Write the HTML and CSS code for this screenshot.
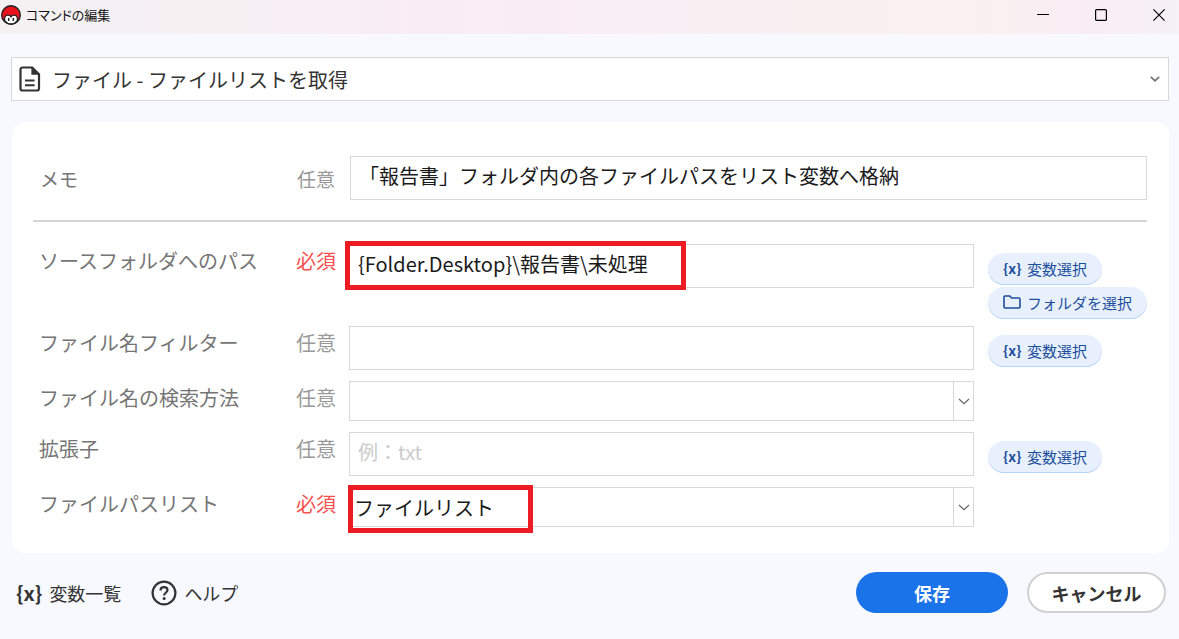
FILE: index.html
```
<!DOCTYPE html>
<html lang="ja">
<head>
    <meta charset="UTF-8">
    <meta name="viewport" content="width=device-width, initial-scale=1.0">
    <title>コマンドの編集</title>
    <link rel="stylesheet" href="styles.css">
</head>
<body>
    <!-- Title bar -->
    <header class="titlebar">
        <svg class="app-icon" width="20" height="20" viewBox="0 0 20 20">
            <circle cx="10" cy="10" r="9.3" fill="#e8141c" stroke="#222" stroke-width="1.4"/>
            <path d="M3.8 15.8C3 12.4 4.2 10.2 6.8 10.2c1.5 0 2.6.6 3.2 1.6.6-1 1.7-1.6 3.2-1.6 2.6 0 3.8 2.2 3 5.6-1.6 2-3.6 3.1-6.2 3.1s-4.6-1.1-6.2-3.1z" fill="#fff" stroke="#222" stroke-width="1.3"/>
            <path d="M7.7 13v3M12.3 13v3" stroke="#222" stroke-width="1.5"/>
        </svg>
        <h1>コマンドの編集</h1>
        <div class="window-buttons">
            <button type="button" aria-label="最小化">
                <svg width="12" height="12" viewBox="0 0 12 12"><path d="M0 5.5h12" stroke="#000"/></svg>
            </button>
            <button type="button" aria-label="最大化">
                <svg width="12" height="12" viewBox="0 0 12 12"><rect x=".6" y=".6" width="10.8" height="10.8" rx="1" fill="none" stroke="#000" stroke-width="1.2"/></svg>
            </button>
            <button type="button" aria-label="閉じる">
                <svg width="12" height="12" viewBox="0 0 12 12"><path d="M.4.4l11.2 11.2M11.6.4L.4 11.6" stroke="#000" stroke-width="1.2"/></svg>
            </button>
        </div>
    </header>

    <main>
        <!-- Command type -->
        <div class="command-select">
            <svg class="file-icon" width="22" height="26" viewBox="0 0 22 26">
                <path d="M3.5 1.5h9.7l6.8 6.8v14.2a2 2 0 0 1-2 2H3.5a2 2 0 0 1-2-2v-19a2 2 0 0 1 2-2z" fill="none" stroke="#333" stroke-width="2.2" stroke-linejoin="round"/>
                <path d="M12.4 1.5v7.3H20z" fill="#333"/>
                <path d="M6 14.5h9.6M6 19.2h9.6" stroke="#333" stroke-width="2"/>
            </svg>
            <select aria-label="コマンド">
                <option>ファイル - ファイルリストを取得</option>
            </select>
            <svg class="chevron" width="10" height="6" viewBox="0 0 10 6"><path d="M.8.8L5 4.8 9.2.8" fill="none" stroke="#777" stroke-width="1.8"/></svg>
        </div>

        <form class="card" id="commandForm">
            <div class="row memo-row">
                <label for="memo">メモ</label>
                <span class="optional">任意</span>
                <input class="text-input" type="text" id="memo" value="「報告書」フォルダ内の各ファイルパスをリスト変数へ格納">
            </div>

            <hr>

            <div class="row">
                <label for="sourceFolder">ソースフォルダへのパス</label>
                <span class="required">必須</span>
                <div class="field">
                    <input class="text-input" type="text" id="sourceFolder" value="{Folder.Desktop}\報告書\未処理">
                    <div class="highlight highlight-path"></div>
                </div>
                <div class="pickers">
                    <button type="button" class="pill"><b>{x}</b>変数選択</button>
                    <button type="button" class="pill">
                        <svg width="18" height="14" viewBox="0 0 18 14"><path d="M1 12V2a1 1 0 0 1 1-1h4.8l1.8 2H16a1 1 0 0 1 1 1v8a1 1 0 0 1-1 1H2a1 1 0 0 1-1-1z" fill="none" stroke="#1c4f9c" stroke-width="1.6"/></svg>フォルダを選択
                    </button>
                </div>
            </div>

            <div class="row">
                <label for="nameFilter">ファイル名フィルター</label>
                <span class="optional">任意</span>
                <div class="field">
                    <input class="text-input" type="text" id="nameFilter">
                </div>
                <div class="pickers">
                    <button type="button" class="pill"><b>{x}</b>変数選択</button>
                </div>
            </div>

            <div class="row">
                <label for="searchMethod">ファイル名の検索方法</label>
                <span class="optional">任意</span>
                <div class="field">
                    <select class="combo" id="searchMethod">
                        <option></option>
                    </select>
                    <span class="combo-arrow">
                        <svg width="12" height="7" viewBox="0 0 12 7"><path d="M1 1l5 4.6L11 1" fill="none" stroke="#666" stroke-width="1.2"/></svg>
                    </span>
                </div>
            </div>

            <div class="row">
                <label for="extension">拡張子</label>
                <span class="optional">任意</span>
                <div class="field">
                    <input class="text-input" type="text" id="extension" placeholder="例：txt">
                </div>
                <div class="pickers">
                    <button type="button" class="pill"><b>{x}</b>変数選択</button>
                </div>
            </div>

            <div class="row">
                <label for="pathList">ファイルパスリスト</label>
                <span class="required">必須</span>
                <div class="field">
                    <select class="combo" id="pathList">
                        <option>ファイルリスト</option>
                    </select>
                    <span class="combo-arrow">
                        <svg width="12" height="7" viewBox="0 0 12 7"><path d="M1 1l5 4.6L11 1" fill="none" stroke="#666" stroke-width="1.2"/></svg>
                    </span>
                    <div class="highlight highlight-list"></div>
                </div>
            </div>
        </form>
    </main>

    <footer>
        <button type="button" class="link-button"><b>{x}</b>変数一覧</button>
        <button type="button" class="link-button">
            <svg width="26" height="26" viewBox="0 0 26 26">
                <circle cx="13" cy="13" r="11.4" fill="none" stroke="#333" stroke-width="2.2"/>
                <path d="M9.5 10.4c0-2 1.5-3.3 3.5-3.3s3.5 1.2 3.5 3c0 2.6-3.4 2.7-3.4 5.4" fill="none" stroke="#333" stroke-width="2.2"/>
                <circle cx="13.1" cy="18.6" r="1.5" fill="#333"/>
            </svg>ヘルプ
        </button>
        <div class="actions">
            <button type="submit" form="commandForm" class="save">保存</button>
            <button type="button" class="cancel">キャンセル</button>
        </div>
    </footer>
</body>
</html>
```
FILE: styles.css
```
* {
    box-sizing: border-box;
}

body {
    margin: 0;
    min-height: 100vh;
    background-color: #f8f9fe;
    font-family: 'Noto Sans CJK JP', sans-serif;
    font-size: 20px;
    color: #333;
}

button, input, select {
    font-family: inherit;
    font-size: inherit;
    color: inherit;
}

button {
    padding: 0;
    border: none;
    background: none;
    cursor: pointer;
}

svg {
    display: block;
    flex: none;
}

/* Title bar */
.titlebar {
    display: flex;
    align-items: center;
    height: 34px;
    padding: 0 14px 5px 1px;
    background: linear-gradient(90deg, #f5f1f3 0%, #f6f0f3 20%, #faecf4 36%, #f8eff3 60%, #faf0f0 82%, #f9edf4 93%, #f5f1f5 100%);
}

.titlebar h1 {
    margin: 0 0 0 5px;
    font-size: 13px;
    font-weight: normal;
    line-height: 20px;
    font-feature-settings: 'palt';
    color: #111;
}

.window-buttons {
    display: flex;
    gap: 46px;
    margin-left: auto;
}

/* Command type */
main {
    padding: 23px 10px 0 11px;
}

.command-select {
    position: relative;
    display: flex;
    align-items: center;
    height: 44px;
    border: 1px solid #d8d8d8;
    background-color: #fff;
}

.command-select select {
    appearance: none;
    width: 100%;
    height: 100%;
    padding: 0 30px 0 40px;
    border: none;
    background: none;
}

.file-icon, .chevron {
    position: absolute;
    pointer-events: none;
}

.file-icon {
    left: 7px;
}

.chevron {
    right: 8px;
}

/* Form card */
.card {
    display: flex;
    flex-direction: column;
    gap: 7px;
    margin: 21px 0 0 1px;
    padding: 34px 22px 22px 27px;
    border-radius: 14px;
    background-color: #fff;
}

.row {
    display: flex;
    align-items: flex-start;
    line-height: 33px;
}

.row label {
    flex: none;
    width: 257px;
    color: #757575;
}

.optional, .required {
    flex: none;
    width: 53px;
    color: #999;
}

.required {
    color: #f94f4f;
}

.memo-row {
    align-items: center;
    padding-left: 1px;
    font-size: 19px;
}

.memo-row .text-input {
    font-size: 20px;
}

hr {
    width: calc(100% + 6px);
    height: 2px;
    margin: 13px 0 15px -6px;
    border: none;
    background-color: #d4d4d4;
}

.field {
    position: relative;
    flex: 1;
    margin-bottom: 4px;
}

.text-input, .combo {
    display: block;
    width: 100%;
    height: 44px;
    border: 1px solid #d8d8d8;
    border-radius: 0;
    background-color: #fff;
    color: #1a1a1a;
}

.text-input {
    padding: 0 8px 5px;
}

.text-input::placeholder {
    color: #ccc;
}

.combo {
    appearance: none;
    height: 40px;
    padding: 0 26px 0 4px;
}

.combo-arrow {
    position: absolute;
    top: 1px;
    right: 1px;
    bottom: 1px;
    display: flex;
    align-items: center;
    justify-content: center;
    width: 20px;
    border-left: 1px solid #d8d8d8;
    pointer-events: none;
}

.highlight {
    position: absolute;
    border: 5px solid #ed1c24;
    pointer-events: none;
}

.highlight-path {
    top: -3px;
    left: -4px;
    width: 341px;
    height: 49px;
}

.highlight-list {
    top: -2px;
    left: -1px;
    width: 185px;
    height: 48px;
}

/* Picker buttons */
.pickers {
    display: flex;
    flex-direction: column;
    align-items: flex-start;
    gap: 2px;
    width: 159px;
    margin-left: 14px;
    padding-top: 9px;
}

.row:not(:has(.pickers)):not(.memo-row) {
    padding-right: 173px;
}

.pill {
    display: flex;
    align-items: center;
    gap: 6px;
    height: 32px;
    padding: 0 15px 2px;
    border-radius: 16px;
    background-color: #e8f0fd;
    box-shadow: inset 0 -1px 0 #b4d2fa;
    font-size: 15px;
    font-weight: normal;
    color: #1c4f9c;
    white-space: nowrap;
}

.pill b {
    width: 18px;
    font-size: 14px;
    line-height: 20px;
}

/* Footer */
footer {
    display: flex;
    align-items: center;
    gap: 30px;
    padding: 19px 13px 25px 16px;
}

.link-button {
    display: flex;
    align-items: center;
    gap: 7px;
    font-size: 18px;
}

.link-button b {
    font-size: 20px;
    line-height: 26px;
}

.actions {
    display: flex;
    gap: 19px;
    margin-left: auto;
}

.save, .cancel {
    height: 41px;
    border-radius: 21px;
    font-size: 18px;
    font-weight: bold;
}

.save {
    width: 152px;
    background-color: #1a73e8;
    color: #fff;
}

.cancel {
    width: 139px;
    border: 2px solid #d0d0d0;
    background-color: #fff;
}
```
